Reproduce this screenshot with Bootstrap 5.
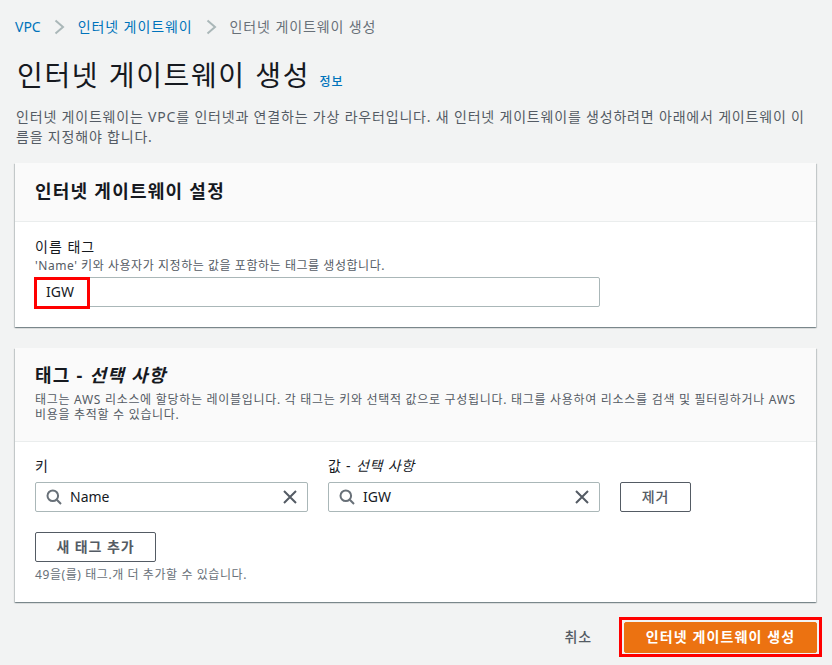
<!DOCTYPE html>
<html lang="ko"><head><meta charset="utf-8"><title>인터넷 게이트웨이 생성</title>
<link href="https://cdn.jsdelivr.net/npm/bootstrap@5.3.0/dist/css/bootstrap.min.css" rel="stylesheet">
<style>
html,body{height:665px;overflow:hidden}
body{background:#f2f3f3;color:#16191f;font-family:"Noto Sans","Noto Sans CJK KR",sans-serif;font-size:14px;line-height:20px}
.pg{padding:17px 16px 0 15px}
.crumbs{height:20px;color:#687078;font-size:14px}
.crumbs a,.inf{color:#0073bb;text-decoration:none}
.ko{letter-spacing:.9px}
.crumbs svg{margin:0 13px}
.ttl{font-size:28px;font-weight:400;line-height:36px;height:41px;margin:19px 0 0 2px;font-family:"Noto Sans CJK KR","Noto Sans",sans-serif;letter-spacing:1.65px}
.inf{font-size:12px;font-weight:500;margin-left:0;vertical-align:0;letter-spacing:1px}
.desc{color:#545b64;margin:10px 0 0 1px;line-height:20px;letter-spacing:.81px}
.pnl{background:#fff;border:0;border-radius:0;box-shadow:0 1px 1px 0 rgba(0,28,36,.3),1px 1px 1px 0 rgba(0,28,36,.15),-1px 1px 1px 0 rgba(0,28,36,.15)}
.pnl-h{background:#fafafa;border-bottom:1px solid #eaeded;padding:16px 20px 0}
.pnl-h h2{font-size:18px;font-weight:700;line-height:24px;margin:0;letter-spacing:1.25px}
.pnl-h p{color:#545b64;font-size:12px;line-height:15px;margin:5px 0 0;letter-spacing:.7px}
.p1{margin-top:16px;height:164px}.p1 .pnl-h{height:59px}
.p2{margin-top:21px;height:254px}.p2 .pnl-h{height:94px;padding:15px 16px 0 20px}
.p1 .pnl-b{padding:15px 20px 0}
.p2 .pnl-b{padding:13px 20px 0}
.lab{line-height:20px;letter-spacing:1px}
.hint{color:#545b64;font-size:12px;line-height:14px;margin-top:2px;letter-spacing:.55px}
.fld{height:30px;border:1px solid #aab7b8;border-radius:2px;background:#fff;display:flex;align-items:center;padding:0 9px 0 10px}
.wide{width:565px;margin-top:4px}
.cl1{width:273px}.cl2{width:272px;margin-left:20px}
.fld svg.mg{margin-right:8px;flex:none}
.fld span{flex:1}
.lab2{height:27px;padding-top:1px;letter-spacing:.8px}
.btnx{height:30px;border:1px solid #545b64;border-radius:2px;background:#fff;color:#545b64;font-weight:700;font-size:14px;line-height:26px;padding:0;display:block;letter-spacing:.9px}
.rm{width:71px;margin:27px 0 0 20px;font-weight:500}
.add{width:121px;margin-top:20px}
.cnt{color:#687078;font-size:12px;line-height:14px;margin-top:6px;letter-spacing:.58px}
.acts{margin-top:17px;height:36px}
.cancel{color:#545b64;font-weight:500;margin-right:32px;letter-spacing:.9px}
.go{width:193px;height:31px;background:#ec7211;border:1px solid #ec7211;border-radius:2px;color:#fff;font-weight:700;font-size:14px;margin-right:-1px;padding:0;letter-spacing:1.1px}
.anch{position:relative}
.hl{position:absolute;border:3px solid #f00;pointer-events:none}
.hl1{left:-2px;top:-1px;width:56px;height:32px}
.hl2{left:-5px;top:-5px;width:203px;height:40px}
</style></head><body>
<div class="pg">
<nav class="crumbs d-flex align-items-center"><a href="#">VPC</a><svg width="11" height="16" viewBox="0 0 11 16" fill="none" stroke="#aab7b8" stroke-width="2"><path d="M1.500 1.500 9 8 1.500 14.500"/></svg><a href="#" class="ko">인터넷 게이트웨이</a><svg width="11" height="16" viewBox="0 0 11 16" fill="none" stroke="#aab7b8" stroke-width="2"><path d="M1.500 1.500 9 8 1.500 14.500"/></svg><span class="ko">인터넷 게이트웨이 생성</span></nav>
<h1 class="ttl">인터넷 게이트웨이 생성 <a href="#" class="inf">정보</a></h1>
<p class="desc">인터넷 게이트웨이는 VPC를 인터넷과 연결하는 가상 라우터입니다. 새 인터넷 게이트웨이를 생성하려면 아래에서 게이트웨이 이름을 지정해야 합니다.</p>
<section class="card pnl p1">
<div class="pnl-h"><h2>인터넷 게이트웨이 설정</h2></div>
<div class="pnl-b">
<div class="lab">이름 태그</div>
<div class="hint">'Name' 키와 사용자가 지정하는 값을 포함하는 태그를 생성합니다.</div>
<div class="fld wide anch"><span>IGW</span><i class="hl hl1"></i></div>
</div></section>
<section class="card pnl p2">
<div class="pnl-h"><h2>태그 - <em>선택 사항</em></h2><p>태그는 AWS 리소스에 할당하는 레이블입니다. 각 태그는 키와 선택적 값으로 구성됩니다. 태그를 사용하여 리소스를 검색 및 필터링하거나 AWS 비용을 추적할 수 있습니다.</p></div>
<div class="pnl-b">
<div class="d-flex">
<div class="cl1"><div class="lab2">키</div><div class="fld"><svg class="mg" width="16" height="16" viewBox="0 0 16 16" fill="none" stroke="#687078" stroke-width="2"><circle cx="6.800" cy="6.800" r="5.300"/><path d="m10.800 10.800 4.200 4.200"/></svg><span>Name</span><svg width="16" height="16" viewBox="0 0 16 16" fill="none" stroke="#545b64" stroke-width="2"><path d="m2 2 12 12M14 2 2 14"/></svg></div></div>
<div class="cl2"><div class="lab2"><span>값 - <em>선택 사항</em></span></div><div class="fld"><svg class="mg" width="16" height="16" viewBox="0 0 16 16" fill="none" stroke="#687078" stroke-width="2"><circle cx="6.800" cy="6.800" r="5.300"/><path d="m10.800 10.800 4.200 4.200"/></svg><span>IGW</span><svg width="16" height="16" viewBox="0 0 16 16" fill="none" stroke="#545b64" stroke-width="2"><path d="m2 2 12 12M14 2 2 14"/></svg></div></div>
<button class="btnx rm" type="button">제거</button>
</div>
<button class="btnx add" type="button">새 태그 추가</button>
<div class="cnt">49을(를) 태그.개 더 추가할 수 있습니다.</div>
</div></section>
<div class="acts d-flex justify-content-end align-items-center">
<span class="cancel">취소</span>
<div class="anch"><button class="go" type="button">인터넷 게이트웨이 생성</button><i class="hl hl2"></i></div>
</div>
</div>
</body></html>
